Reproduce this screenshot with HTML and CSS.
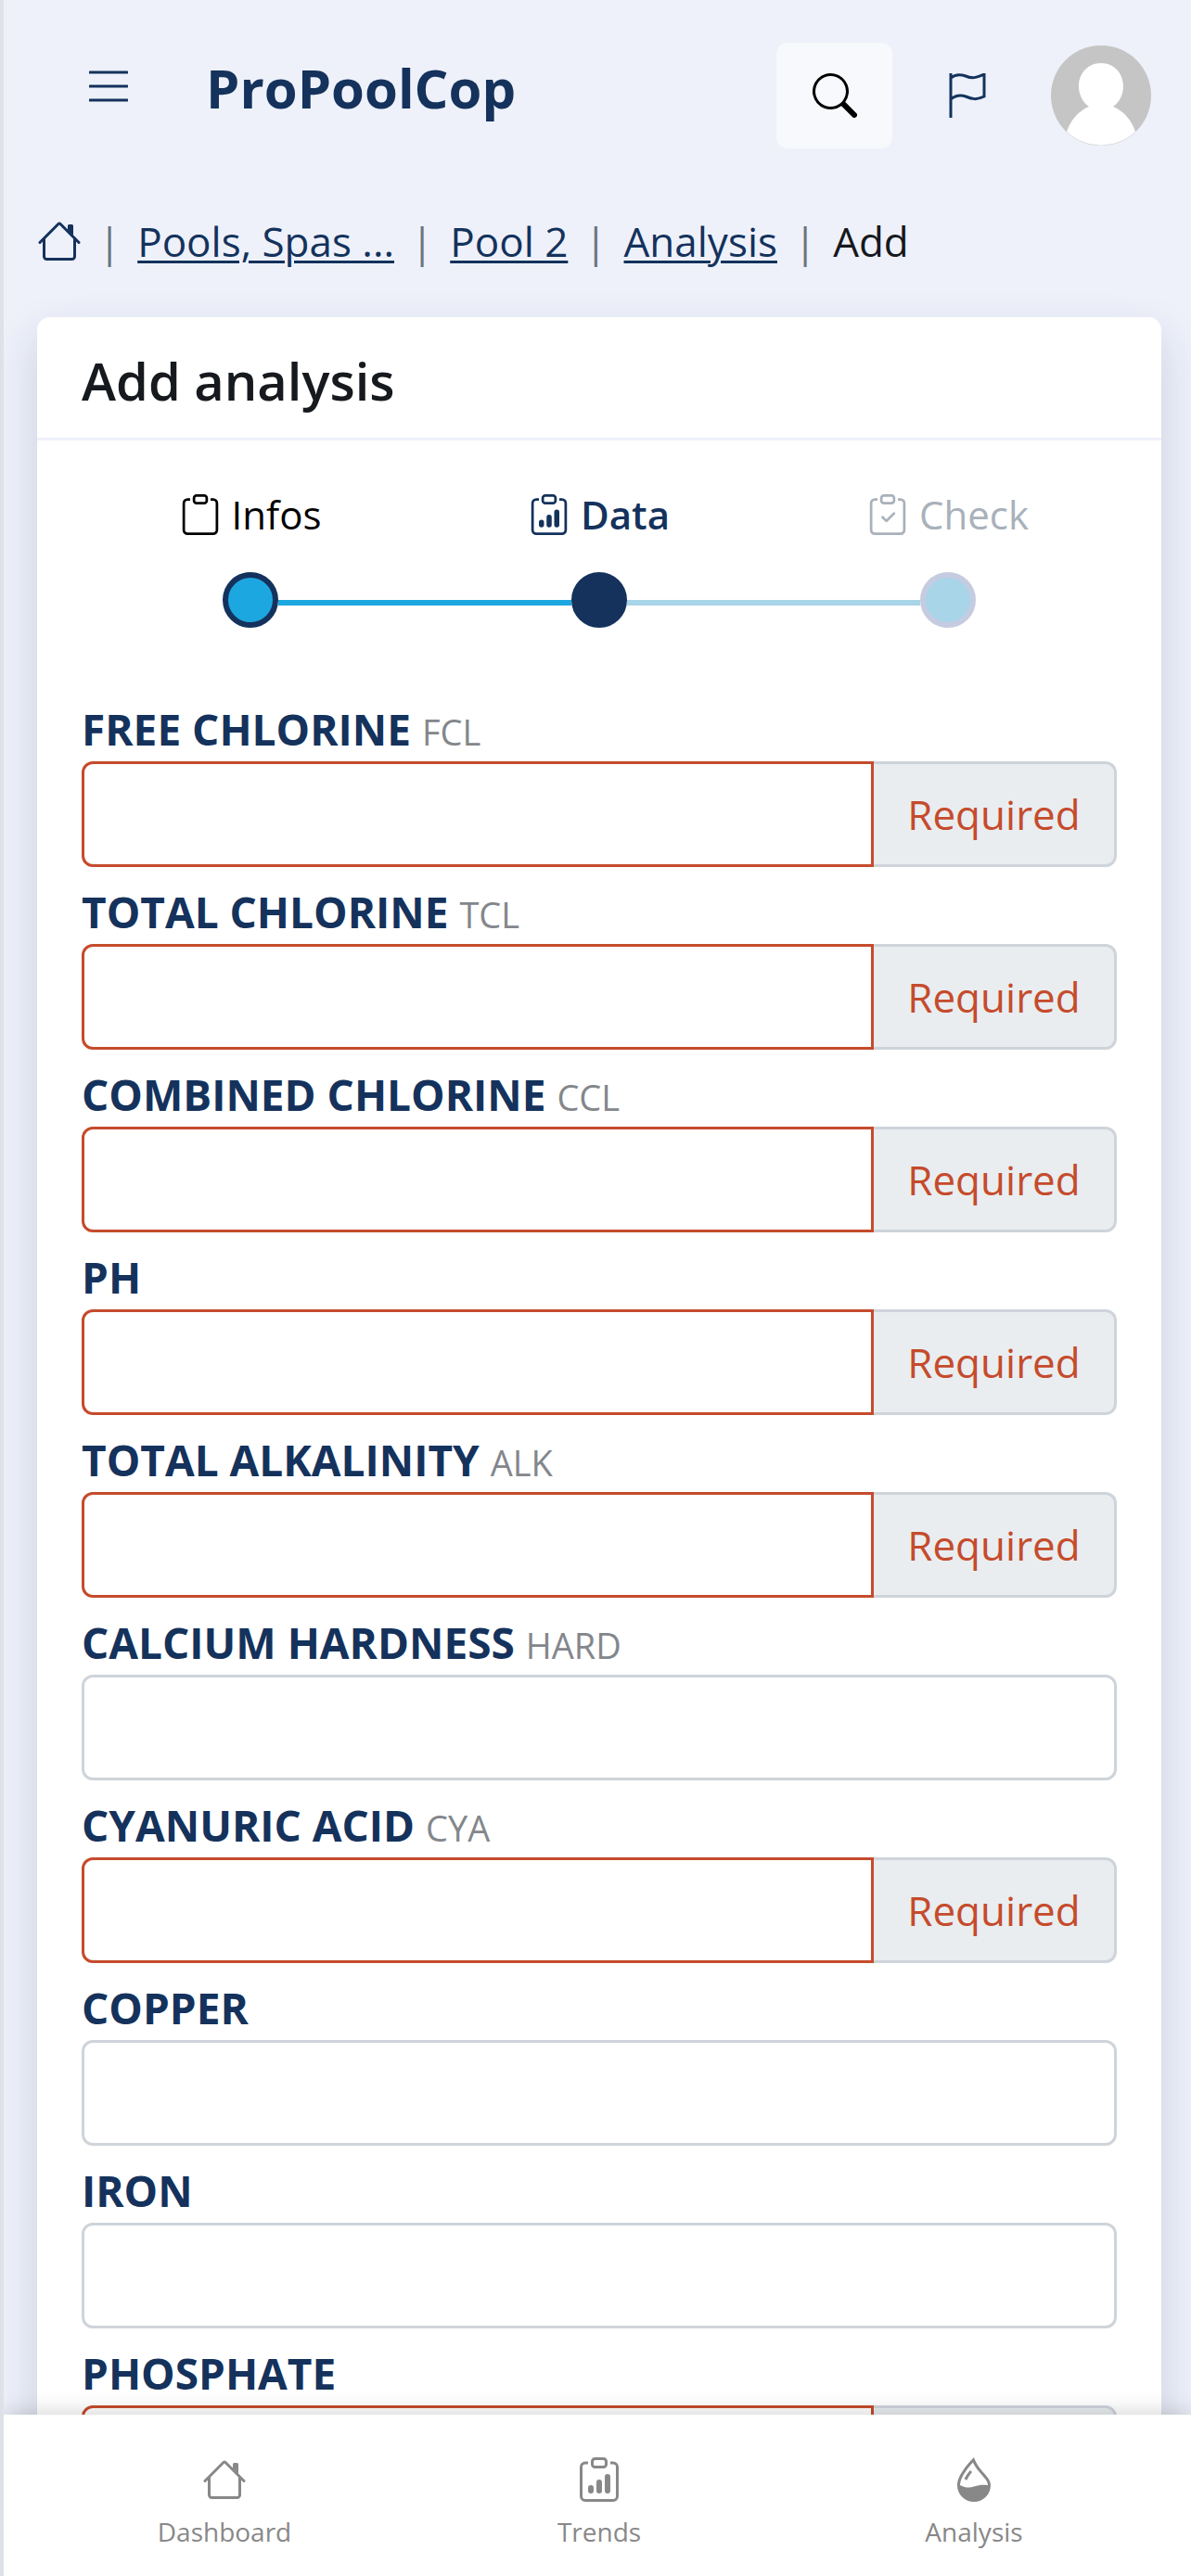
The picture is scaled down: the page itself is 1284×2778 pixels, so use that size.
FILE: index.html
```html
<!DOCTYPE html>
<html lang="en">
<head>
  <meta charset="utf-8">
  <meta name="viewport" content="width=device-width, initial-scale=1">
  <title>Add analysis - ProPoolCop</title>
  <link rel="stylesheet" href="styles.css">
</head>
<body>
  <svg class="sprite" aria-hidden="true">
    <symbol id="house" viewBox="0 0 16 16">
      <path d="M2 13.5V7h1v6.5a.5.5 0 0 0 .5.5h9a.5.5 0 0 0 .5-.5V7h1v6.5a1.5 1.5 0 0 1-1.5 1.5h-9A1.5 1.5 0 0 1 2 13.5zm11-11V6l-2-2V2.5a.5.5 0 0 1 .5-.5h1a.5.5 0 0 1 .5.5z"/>
      <path d="M7.293 1.5a1 1 0 0 1 1.414 0l6.647 6.646a.5.5 0 0 1-.708.708L8 2.207 1.354 8.854a.5.5 0 1 1-.708-.708L7.293 1.5z"/>
    </symbol>
    <symbol id="clipboard" viewBox="0 0 16 16">
      <path d="M4 1.5H3a2 2 0 0 0-2 2V14a2 2 0 0 0 2 2h10a2 2 0 0 0 2-2V3.5a2 2 0 0 0-2-2h-1v1h1a1 1 0 0 1 1 1V14a1 1 0 0 1-1 1H3a1 1 0 0 1-1-1V3.5a1 1 0 0 1 1-1h1v-1z"/>
      <path d="M9.5 1a.5.5 0 0 1 .5.5v1a.5.5 0 0 1-.5.5h-3a.5.5 0 0 1-.5-.5v-1a.5.5 0 0 1 .5-.5h3zm-3-1A1.5 1.5 0 0 0 5 1.5v1A1.5 1.5 0 0 0 6.5 4h3A1.5 1.5 0 0 0 11 2.5v-1A1.5 1.5 0 0 0 9.5 0h-3z"/>
    </symbol>
    <symbol id="clipboard-data" viewBox="0 0 16 16">
      <use href="#clipboard"/>
      <path d="M4 11a1 1 0 1 1 2 0v1a1 1 0 1 1-2 0v-1zm6-4a1 1 0 1 1 2 0v5a1 1 0 1 1-2 0V7zM7 9a1 1 0 0 1 2 0v3a1 1 0 1 1-2 0V9z"/>
    </symbol>
    <symbol id="clipboard-check" viewBox="0 0 16 16">
      <use href="#clipboard"/>
      <path d="M10.854 7.146a.5.5 0 0 1 0 .708l-3 3a.5.5 0 0 1-.708 0l-1.5-1.5a.5.5 0 1 1 .708-.708L7.5 9.793l2.646-2.647a.5.5 0 0 1 .708 0z"/>
    </symbol>
    <symbol id="droplet-half" viewBox="0 0 16 16">
      <path fill-rule="evenodd" d="M7.21.8C7.69.295 8 0 8 0c.109.363.234.708.371 1.038.812 1.946 2.073 3.35 3.197 4.6C12.878 7.096 14 8.345 14 10a6 6 0 0 1-12 0C2 6.668 5.58 2.517 7.21.8zm.413 1.021A31.25 31.25 0 0 0 5.794 3.99c-.726.95-1.436 2.008-1.96 3.07C3.304 8.133 3 9.138 3 10c0 0 2.5 1.5 5 .5s5-.5 5-.5c0-1.201-.796-2.157-2.181-3.7l-.03-.032C9.75 5.11 8.5 3.72 7.623 1.82z"/>
      <path d="M4.553 7.776c.82-1.641 1.717-2.753 2.093-3.13l.708.708c-.29.29-1.128 1.311-1.907 2.87l-.894-.448z"/>
    </symbol>
    <symbol id="search" viewBox="0 0 16 16">
      <path d="M11.742 10.344a6.5 6.5 0 1 0-1.397 1.398h-.001c.03.04.062.078.098.115l3.85 3.85a1 1 0 0 0 1.415-1.414l-3.85-3.85a1.007 1.007 0 0 0-.115-.1zM12 6.5a5.5 5.5 0 1 1-11 0 5.5 5.5 0 0 1 11 0z"/>
    </symbol>
    <symbol id="menu" viewBox="0 0 42 36">
      <path d="M1 3h40M1 18h40M1 33h40" fill="none" stroke="currentColor" stroke-width="3" stroke-linecap="round"/>
    </symbol>
    <symbol id="flag" viewBox="0 0 42 48">
      <path d="M3 0v48M3 5C8 1 13 1 19 3C26 6 31 5 39 1V25C31 29 26 28 19 25C13 23 8 24 3 28" fill="none" stroke="currentColor" stroke-width="3"/>
    </symbol>
    <symbol id="person" viewBox="0 0 108 108">
      <circle cx="54" cy="54" r="54" fill="#c5c5c5"/>
      <path fill="#fff" d="M54 19c14 0 24 11 24 25 0 9-4 17-11 22 12 5 20 15 24 27a54 54 0 0 1-74 0c4-12 12-22 24-27-7-5-11-13-11-22 0-14 10-25 24-25z"/>
    </symbol>
  </svg>

  <header class="topbar">
    <button class="icon-button" type="button" aria-label="Menu"><svg class="icon-menu"><use href="#menu"/></svg></button>
    <a class="brand" href="#">ProPoolCop</a>
    <div class="actions">
      <button class="icon-button search" type="button" aria-label="Search"><svg class="icon"><use href="#search"/></svg></button>
      <button class="icon-button" type="button" aria-label="Language"><svg class="icon-flag"><use href="#flag"/></svg></button>
      <a class="avatar" href="#" aria-label="Profile"><svg><use href="#person"/></svg></a>
    </div>
  </header>

  <nav class="breadcrumb" aria-label="Breadcrumb">
    <a href="#" aria-label="Home"><svg class="icon"><use href="#house"/></svg></a>
    <span class="sep">|</span>
    <a href="#">Pools, Spas ...</a>
    <span class="sep">|</span>
    <a href="#">Pool 2</a>
    <span class="sep">|</span>
    <a href="#">Analysis</a>
    <span class="sep">|</span>
    <span class="current">Add</span>
  </nav>

  <main class="content">
    <section class="card">
      <h1 class="card-title">Add analysis</h1>
      <ol class="steps">
        <li class="step done">
          <span class="step-label"><svg class="icon-step"><use href="#clipboard"/></svg>Infos</span>
          <span class="track"><span class="dot"></span></span>
        </li>
        <li class="step active">
          <span class="step-label"><svg class="icon-step"><use href="#clipboard-data"/></svg>Data</span>
          <span class="track"><span class="dot"></span></span>
        </li>
        <li class="step pending">
          <span class="step-label"><svg class="icon-step"><use href="#clipboard-check"/></svg>Check</span>
          <span class="track"><span class="dot"></span></span>
        </li>
      </ol>
      <form class="fields">
        <div class="field">
          <label for="fcl">FREE CHLORINE <small>FCL</small></label>
          <div class="group"><input class="required" id="fcl" type="text"><span class="addon">Required</span></div>
        </div>
        <div class="field">
          <label for="tcl">TOTAL CHLORINE <small>TCL</small></label>
          <div class="group"><input class="required" id="tcl" type="text"><span class="addon">Required</span></div>
        </div>
        <div class="field">
          <label for="ccl">COMBINED CHLORINE <small>CCL</small></label>
          <div class="group"><input class="required" id="ccl" type="text"><span class="addon">Required</span></div>
        </div>
        <div class="field">
          <label for="ph">PH</label>
          <div class="group"><input class="required" id="ph" type="text"><span class="addon">Required</span></div>
        </div>
        <div class="field">
          <label for="alk">TOTAL ALKALINITY <small>ALK</small></label>
          <div class="group"><input class="required" id="alk" type="text"><span class="addon">Required</span></div>
        </div>
        <div class="field">
          <label for="hard">CALCIUM HARDNESS <small>HARD</small></label>
          <div class="group"><input id="hard" type="text"></div>
        </div>
        <div class="field">
          <label for="cya">CYANURIC ACID <small>CYA</small></label>
          <div class="group"><input class="required" id="cya" type="text"><span class="addon">Required</span></div>
        </div>
        <div class="field">
          <label for="copper">COPPER</label>
          <div class="group"><input id="copper" type="text"></div>
        </div>
        <div class="field">
          <label for="iron">IRON</label>
          <div class="group"><input id="iron" type="text"></div>
        </div>
        <div class="field">
          <label for="phosphate">PHOSPHATE</label>
          <div class="group"><input class="required" id="phosphate" type="text"><span class="addon"></span></div>
        </div>
      </form>
    </section>
  </main>

  <nav class="tabbar" aria-label="Main">
    <a href="#"><svg class="icon"><use href="#house"/></svg>Dashboard</a>
    <a href="#"><svg class="icon"><use href="#clipboard-data"/></svg>Trends</a>
    <a href="#"><svg class="icon"><use href="#droplet-half"/></svg>Analysis</a>
  </nav>
</body>
</html>
```

FILE: styles.css
```css
:root {
  --navy: #14325c;
  --sky: #1da7e0;
  --pale-sky: #a8d5e8;
  --red: #c54b2c;
  --line: #ced4da;
  --page: #eef1fa;
}

* { box-sizing: border-box; }

body {
  display: flex;
  flex-direction: column;
  height: 100vh;
  margin: 0;
  border-left: 4px solid #dee2e8;
  background: var(--page);
  color: #16191d;
  font: 44px/68px "Open Sans", "Noto Sans", sans-serif;
}

svg { display: block; fill: currentColor; }
a { color: var(--navy); }

.sprite { position: absolute; width: 0; height: 0; }
.icon { width: 48px; height: 48px; }
.icon-menu { width: 42px; height: 36px; }
.icon-flag { width: 42px; height: 48px; }
.icon-step { width: 44px; height: 44px; }

.topbar {
  display: flex;
  flex: none;
  align-items: flex-start;
  padding: 46px 43px 0 92px;
}

.icon-button {
  display: flex;
  align-items: center;
  justify-content: center;
  height: 114px;
  padding: 0;
  border: 0;
  border-radius: 12px;
  background: none;
  color: var(--navy);
}

.topbar > .icon-button { height: 93px; }

.search { width: 125px; background: #f8f9fc; color: #000; }

.brand {
  margin-left: 84px;
  font-size: 58px;
  font-weight: 700;
  line-height: 98px;
  text-decoration: none;
}

.actions {
  display: flex;
  align-items: center;
  gap: 60px;
  margin-left: auto;
}

.avatar { margin-left: 9px; }
.avatar svg { width: 108px; height: 108px; }

.breadcrumb {
  display: flex;
  flex: none;
  align-items: center;
  gap: 18px;
  padding: 66px 36px 0;
}

.breadcrumb a { text-decoration-thickness: 3px; text-underline-offset: 4px; }
.sep { color: #6c757d; }

.content {
  flex: 1;
  min-height: 0;
  padding: 48px 32px 0 36px;
  overflow: hidden;
}

.card {
  border-radius: 14px;
  background: #fff;
  box-shadow: 0 20px 48px rgba(30, 40, 80, .16);
}

.card-title {
  margin: 0;
  padding: 26px 48px 20px;
  border-bottom: 3px solid var(--page);
  font-size: 56px;
  font-weight: 600;
  line-height: 84px;
}

.steps {
  display: grid;
  grid-template-columns: repeat(3, 1fr);
  margin: 0;
  padding: 46px 42px 0;
  list-style: none;
}

.step { display: grid; gap: 28px; }

.step-label {
  display: flex;
  align-items: center;
  justify-content: center;
  gap: 12px;
  font-size: 42px;
}

.done { color: #000; }
.active { color: var(--navy); font-weight: 600; }
.pending { color: #a9b1ba; }

/* each step draws half of the line on either side of its dot */
.track { display: flex; align-items: center; }

.track::before,
.track::after {
  flex: 1;
  height: 6px;
  margin-top: 6px;
  background: var(--sky);
  content: "";
}

.active .track::after,
.pending .track::before { background: var(--pale-sky); }

.done .track::before,
.pending .track::after { background: none; }

.dot {
  width: 60px;
  height: 60px;
  border: 6px solid var(--navy);
  border-radius: 50%;
  background: var(--sky);
}

.active .dot { background: var(--navy); }
.pending .dot { border-color: #c5cce1; background: var(--pale-sky); }

.fields {
  display: grid;
  gap: 14px;
  padding: 75px 48px 48px;
}

.field label {
  display: block;
  color: var(--navy);
  font-size: 46px;
  font-weight: 700;
  line-height: 69px;
}

.field small {
  color: #83878c;
  font-size: 38px;
  font-weight: 400;
  line-height: 1;
}

.group { display: flex; height: 114px; }

.group input {
  flex: 1;
  min-width: 0;
  padding: 0 36px;
  border: 3px solid var(--line);
  border-radius: 12px;
  background: #fff;
  font: inherit;
}

.group input.required {
  border-color: var(--red);
  border-radius: 12px 0 0 12px;
}

.addon {
  display: flex;
  flex: none;
  align-items: center;
  justify-content: center;
  width: 262px;
  border: 3px solid var(--line);
  border-left: 0;
  border-radius: 0 12px 12px 0;
  background: #e9edf0;
  color: var(--red);
}

.tabbar {
  position: relative;
  display: grid;
  flex: none;
  grid-template-columns: repeat(3, 1fr);
  height: 174px;
  padding: 46px 32px 0 36px;
  background: #fff;
  box-shadow: 0 0 24px rgba(0, 0, 0, .2);
}

.tabbar a {
  display: flex;
  flex-direction: column;
  align-items: center;
  gap: 10px;
  color: #888;
  font-size: 28px;
  line-height: 44px;
  text-decoration: none;
}
```
